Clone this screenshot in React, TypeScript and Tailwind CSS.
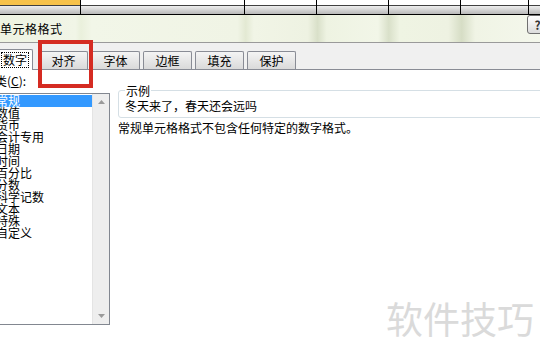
const cols = [81, 164, 72, 72, 72, 68, 20];
const tabs = ['对齐', '字体', '边框', '填充', '保护'];
const categories = ['常规', '数值', '货币', '会计专用', '日期', '时间', '百分比', '分数', '科学记数', '文本', '特殊', '自定义'];

const App = () => {
  return (
    <div className="relative w-[540px] h-[360px] overflow-hidden bg-white text-[12px] leading-[12px] text-black font-['Noto_Sans_CJK_SC',sans-serif]">
      {/* sheet strip behind the dialog */}
      <div className="flex h-[15px] border-b border-black">
        {cols.map((w, i) => (
          <div key={i} style={{ width: w }} className="flex shrink-0 flex-col border-r border-black">
            <div className={`h-[6px] border-b border-[#404040] ${i === 0 ? 'bg-[#f7c24a]' : 'bg-white'}`} />
            <div className="flex-1 bg-gradient-to-b from-[#eeeeee] to-[#b9b9b9]" />
          </div>
        ))}
      </div>

      {/* title bar */}
      <div className="flex h-[28px] items-center justify-between border-b border-[#9a9a9a] bg-[linear-gradient(90deg,#eef3e2_0%,#f1f5e7_14%,#eaf0dc_15%,#f2f6e8_17%,#f0f4e5_44%,#e3e9d3_45.5%,#f1f5e6_47%,#eef2e2_57%,#d9e0c9_58.8%,#eef3e2_60.5%,#f2f6e8_70%,#d9e0c9_72%,#eff4e3_74%,#eef2e2_83%,#d6ddc5_85.5%,#f0f4e5_88%,#f4f7ec_100%)]">
        <span className="text-[12px] tracking-[0.5px]">单元格格式</span>
        <div className="-mr-[8px] mb-[8px] flex h-[19px] w-[21px] items-center justify-center rounded-[3px] border border-[#707070] bg-gradient-to-b from-white to-[#dcdcdc] text-[12px] font-bold text-[#333]">
          ?
        </div>
      </div>

      {/* tab strip */}
      <div className="flex h-[27px] items-end border-b border-[#898c95] bg-[#f0f0f0]">
        <div className="-mb-px -ml-[14px] mr-[6px] flex h-[21px] w-[47px] items-center justify-end rounded-t-[2px] border border-b-0 border-[#898c95] bg-white pr-[3px]">
          <span className="border border-dotted border-black px-[1px] py-[1px]">数字</span>
        </div>
        <div className="flex gap-[3px]">
          {tabs.map((t) => (
            <div
              key={t}
              className="flex h-[18px] w-[49px] items-center justify-center rounded-t-[2px] border border-b-0 border-[#898c95] bg-gradient-to-b from-[#f4f4f4] to-[#dadada]"
            >
              {t}
            </div>
          ))}
        </div>
      </div>

      {/* body */}
      <div className="flex pt-[5px]">
        <div className="-ml-[10px] flex w-[120px] shrink-0 flex-col">
          <div className="h-[12px] pl-[5px]">
            类(<span className="underline">C</span>):
          </div>
          <div className="mt-[6px] flex h-[232px] border border-[#828790] bg-white">
            <div className="flex-1 pt-px">
              {categories.map((c, i) => (
                <div
                  key={c}
                  className={`h-[12px] pl-[5px] leading-[12px] ${i === 0 ? 'bg-[#3399ff] text-white' : ''}`}
                >
                  {c}
                </div>
              ))}
            </div>
            <div className="flex w-[17px] flex-col items-center justify-between border-l border-[#e4e4e4] bg-[#eeeeee] py-[6px]">
              <svg width="7" height="4" viewBox="0 0 7 4">
                <path d="M0 4 L3.5 0 L7 4 Z" fill="#9a9a9a" />
              </svg>
              <svg width="7" height="4" viewBox="0 0 7 4">
                <path d="M0 0 L3.5 4 L7 0 Z" fill="#9a9a9a" />
              </svg>
            </div>
          </div>
        </div>

        <div className="ml-[8px] flex flex-col">
          <fieldset className="mt-[9px] w-[480px] rounded-[3px] border border-[#d5dfe5] px-[6px] pb-[5px]">
            <legend className="px-px leading-[13px]">示例</legend>
            <div className="pt-[3px]">冬天来了，春天还会远吗</div>
          </fieldset>
          <div className="mt-[4px]">常规单元格格式不包含任何特定的数字格式。</div>
        </div>
      </div>

      {/* highlight box drawn over the tab */}
      <div className="absolute left-[38px] top-[40px] h-[48px] w-[55px] border-[4px] border-[#d52b22]" />

      {/* watermark */}
      <div className="absolute right-[6px] top-[298px] text-[37px] leading-[40px] text-[#dadada]">软件技巧</div>
    </div>
  );
};

export default App;
